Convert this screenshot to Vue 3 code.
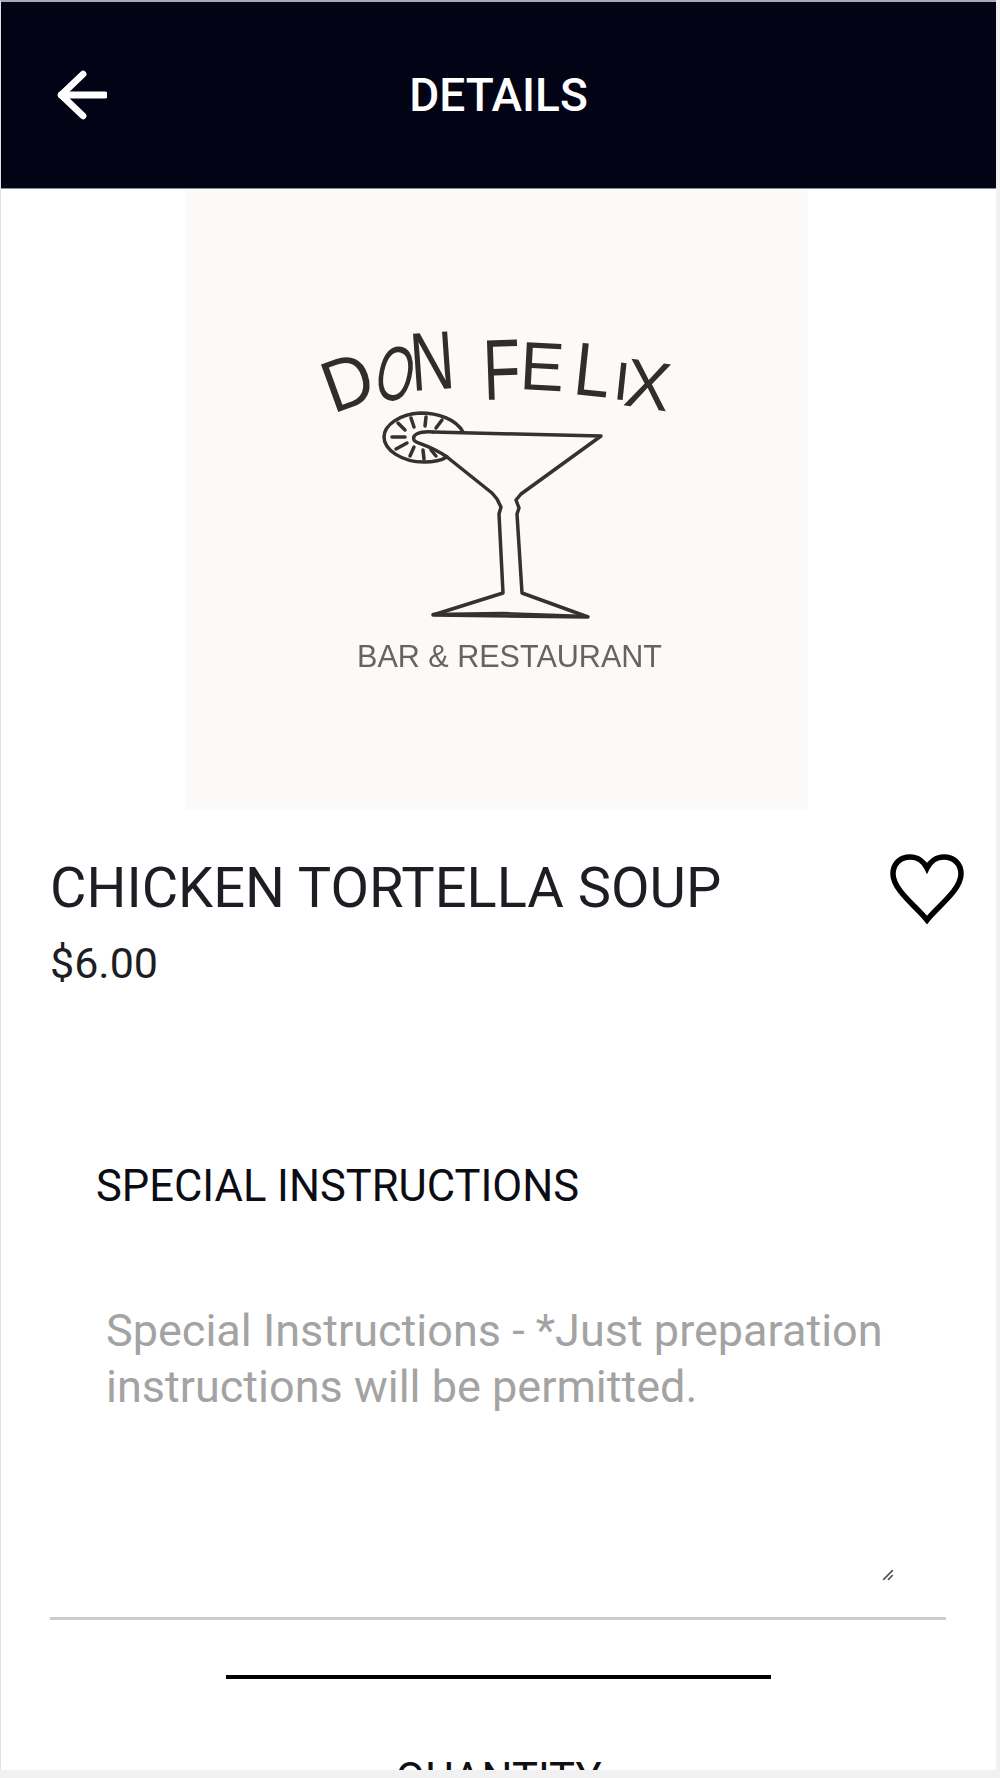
<template>
  <div class="screen">
    <div class="app-bar">
      <svg class="back-icon" viewBox="0 0 48 48" fill="none" stroke="#fff" stroke-width="6.5" stroke-linecap="round" stroke-linejoin="round">
        <path d="M25 4 4 24l21 20"></path>
        <path d="M4 24h42"></path>
      </svg>
      <span class="bar-title">DETAILS</span>
    </div>

    <div class="logo-box">
      <svg class="logo" viewBox="186 190 622 620" fill="none" stroke="#333230" stroke-width="3.5" stroke-linejoin="round" stroke-linecap="round">
        <text
          v-for="l in logoLetters"
          :key="l.x"
          class="logo-big"
          :transform="`translate(${l.x} ${l.y}) rotate(${l.r}) scale(${l.sx} ${l.sy})`"
        >{{ l.c }}</text>
        <!-- glass -->
        <path d="M433 432 601 436 521 494 516 500 519 508 517 514 522 593 588 617 433 615 503 593 499 514 501 507 497 499 492 493 447 457"></path>
        <path d="M433 614 502 613 586 616" stroke-width="2.5"></path>
        <!-- lime slice -->
        <path d="M463 432C456 419 438 413 420 413 400 414 384 425 384 437 384 450 402 462 424 462 432 462 442 460 447 457"></path>
        <path d="M433 432C418 431 412 435 414 440 416 444 428 444 447 457"></path>
        <path d="M398 423 405 430M411 418 414 427M426 417 425 426M442 420 436 428M392 437H405M396 449 407 443M410 456 414 447M424 459 423 450M436 456 431 450" stroke-width="3.5"></path>
        <text class="logo-small" x="357" y="667" textLength="305" lengthAdjust="spacingAndGlyphs">BAR &amp; RESTAURANT</text>
      </svg>
    </div>

    <div class="item-row">
      <div class="item-text">
        <h1 class="item-name">CHICKEN TORTELLA SOUP</h1>
        <div class="item-price">$6.00</div>
      </div>
      <svg class="heart" viewBox="0 0 74 70" fill="none" stroke="#000" stroke-width="5.5" stroke-linejoin="miter">
        <path d="M37 66C27 53 3 36 3 20 3 9 11 3 20 3 28 3 34 8 37 14 40 8 46 3 54 3 63 3 71 9 71 20 71 36 47 53 37 66Z"></path>
      </svg>
    </div>

    <div class="instructions">
      <h2 class="section-label">SPECIAL INSTRUCTIONS</h2>
      <div class="field">
        <p class="placeholder">Special Instructions - *Just preparation instructions will be permitted.</p>
        <svg class="resize-grip" viewBox="0 0 10 10" fill="none" stroke="#555" stroke-width="1.4">
          <path d="M1 9 9 1M5 9 9 5"></path>
        </svg>
      </div>
    </div>

    <div class="divider"></div>
    <div class="quantity">QUANTITY</div>
  </div>
</template>

<script setup>
// hand drawn lettering of the logo, one glyph at a time
const logoLetters = [
  { c: 'D', x: 333, y: 414, r: -20, sx: 0.95, sy: 1.02 },
  { c: 'O', x: 372, y: 396, r: 12, sx: 0.66, sy: 1.08 },
  { c: 'N', x: 412, y: 391, r: -4, sx: 0.85, sy: 1.15 },
  { c: 'F', x: 484, y: 400, r: -2, sx: 0.85, sy: 1.2 },
  { c: 'E', x: 519, y: 389, r: 3, sx: 0.92, sy: 0.95 },
  { c: 'L', x: 572, y: 394, r: 6, sx: 0.9, sy: 1.05 },
  { c: 'I', x: 612, y: 399, r: 6, sx: 0.8, sy: 0.75 },
  { c: 'X', x: 622, y: 405, r: 8, sx: 0.95, sy: 0.95 }
]
</script>

<style>
html,
body {
  margin: 0;
  background: #f1f1f1;
}
</style>

<style scoped>
.screen {
  box-sizing: border-box;
  width: 996px;
  height: 1770px;
  overflow: hidden;
  background: #fff;
  border-top: 2px solid #a9a9b2;
  border-left: 1px solid #e2e2e2;
  font-family: Roboto, "Liberation Sans", sans-serif;
}

.app-bar {
  position: relative;
  display: flex;
  align-items: center;
  justify-content: center;
  height: 186px;
  background: #020314;
  border-bottom: 1px solid #8c8c96;
}

.back-icon {
  position: absolute;
  left: 56px;
  top: 68px;
  width: 50px;
  height: 50px;
}

.bar-title {
  color: #fff;
  font-size: 46px;
  font-weight: 500;
}

.logo-box {
  width: 622px;
  height: 620px;
  margin: 1px 0 0 185px;
  background: #fbfaf8;
}

.logo {
  display: block;
  width: 100%;
  height: 100%;
  filter: blur(0.5px);
}

.logo-big {
  fill: #2f2e2c;
  stroke: none;
  font-family: "Liberation Sans", sans-serif;
  font-size: 72px;
}

.logo-small {
  fill: #666462;
  stroke: none;
  font-family: "Liberation Sans", sans-serif;
  font-size: 32px;
}

.item-row {
  display: flex;
  justify-content: space-between;
  padding: 44px 32px 0 49px;
}

.item-name {
  margin: 0;
  color: #1d1d24;
  font-size: 56px;
  font-weight: 400;
  line-height: 68px;
}

.item-price {
  margin-top: 16px;
  color: #1d1d24;
  font-size: 43px;
  line-height: 50px;
}

.heart {
  width: 74px;
  height: 70px;
}

.instructions {
  padding: 175px 50px 0 49px;
}

.section-label {
  margin: 0 0 0 46px;
  color: #0c0c14;
  font-size: 43.5px;
  font-weight: 400;
  line-height: 48px;
}

.field {
  position: relative;
  box-sizing: border-box;
  height: 351px;
  margin-top: 58px;
  padding: 34px 30px 0 56px;
  border-bottom: 3px solid #ccc;
}

.placeholder {
  margin: 0;
  color: #a3a3a3;
  font-size: 45px;
  line-height: 56px;
}

.resize-grip {
  position: absolute;
  right: 52px;
  bottom: 36px;
  width: 12px;
  height: 12px;
}

.divider {
  width: 545px;
  height: 4px;
  margin: 55px auto 0;
  background: #000;
}

.quantity {
  margin-top: 77px;
  color: #111;
  font-size: 43.5px;
  font-weight: 400;
  line-height: 48px;
  text-align: center;
}
</style>
